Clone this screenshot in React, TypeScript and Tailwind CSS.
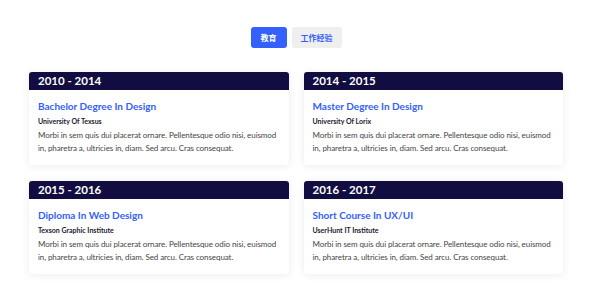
const items = [
  { years: "2010 - 2014", title: "Bachelor Degree In Design", school: "University Of Texsus" },
  { years: "2014 - 2015", title: "Master Degree In Design", school: "University Of Lorix" },
  { years: "2015 - 2016", title: "Diploma In Web Design", school: "Texson Graphic Institute" },
  { years: "2016 - 2017", title: "Short Course In UX/UI", school: "UserHunt IT Institute" },
];

const text =
  "Morbi in sem quis dui placerat ornare. Pellentesque odio nisi, euismod in, pharetra a, ultricies in, diam. Sed arcu. Cras consequat.";

export default function App() {
  return (
    <div
      className="w-[590px] h-[300px] bg-white pt-[27px]"
      style={{ fontFamily: 'Lato, "Noto Sans CJK SC", sans-serif' }}
    >
      <div className="flex justify-center gap-[5px] pl-[2px]">
        <button className="h-[21px] w-[36px] rounded-[3px] bg-[#3460fb] text-[8px] font-bold text-white">
          教育
        </button>
        <button className="h-[21px] w-[50px] rounded-[3px] bg-[#efefef] text-[8px] font-bold text-[#3460fb]">
          工作经验
        </button>
      </div>

      <div className="mt-[24px] ml-[29px] grid w-[534px] grid-cols-2 gap-x-[15px] gap-y-[16px]">
        {items.map((it) => (
          <div
            key={it.years}
            className="overflow-hidden rounded-[3px] bg-white shadow-[0_1px_8px_rgba(0,0,0,0.08)]"
          >
            <div className="flex h-[18px] items-center bg-[#120d40] px-[9px] text-[11.5px] font-bold text-white">
              {it.years}
            </div>
            <div className="px-[9px] pt-[9px] pb-[10px]">
              <div className="text-[10px] font-bold leading-[14px] text-[#3460fb]">{it.title}</div>
              <div className="mt-[1px] text-[7px] font-bold leading-[14px] text-[#1a1a2e]">{it.school}</div>
              <p className="mt-[1px] text-[8px] leading-[13px] tracking-[-0.08px] text-[#454545]">{text}</p>
            </div>
          </div>
        ))}
      </div>
    </div>
  );
}
